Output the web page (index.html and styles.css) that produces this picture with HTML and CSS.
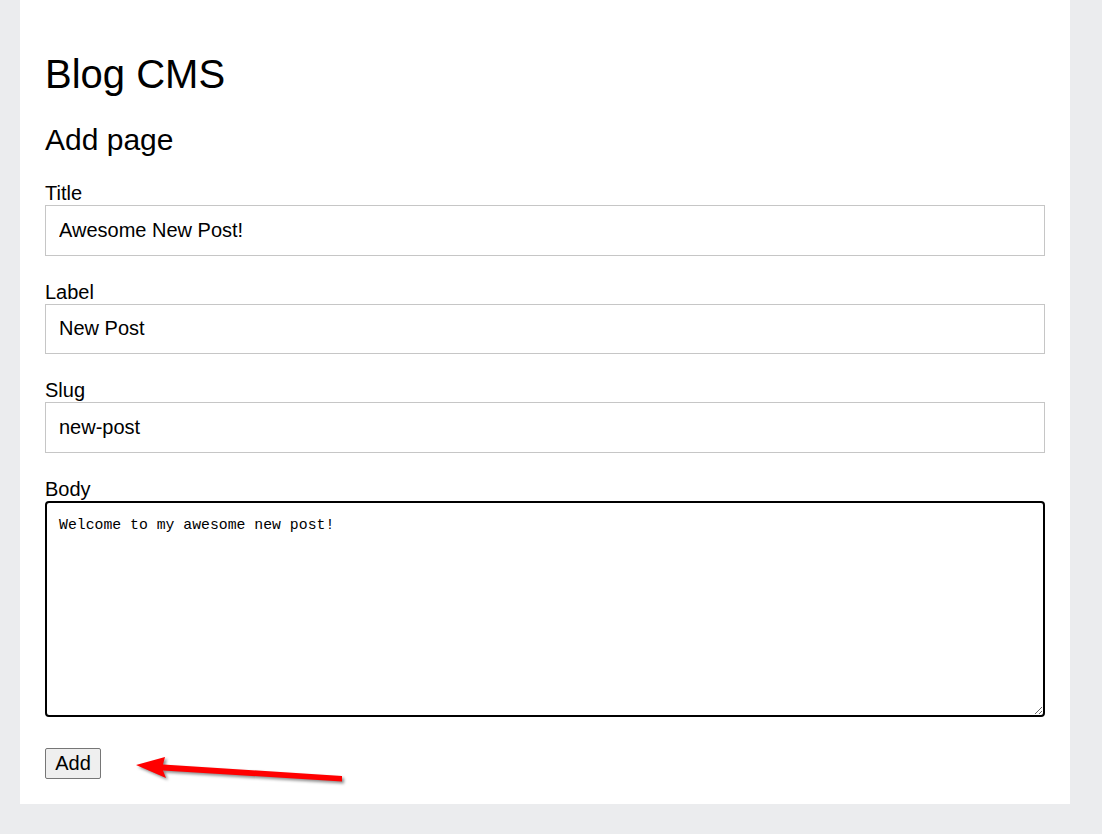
FILE: index.html
```html
<!DOCTYPE html>
<html lang="en">
<head>
<meta charset="utf-8">
<title>Blog CMS</title>
<link rel="stylesheet" href="styles.css">
</head>
<body>
<main class="page">
  <h1 class="title">Blog CMS</h1>
  <h2 class="subtitle">Add page</h2>
  <form class="form">
    <div class="field">
      <label class="label" for="title">Title</label>
      <input class="input" id="title" type="text" value="Awesome New Post!">
    </div>
    <div class="field">
      <label class="label" for="label">Label</label>
      <input class="input" id="label" type="text" value="New Post">
    </div>
    <div class="field">
      <label class="label" for="slug">Slug</label>
      <input class="input" id="slug" type="text" value="new-post">
    </div>
    <div class="field field-body">
      <label class="label" for="body">Body</label>
      <textarea class="textarea" id="body">Welcome to my awesome new post!</textarea>
    </div>
    <button class="button" type="button">Add</button>
  </form>
</main>
<svg class="arrow" width="230" height="40" viewBox="0 0 230 40" aria-hidden="true">
  <path d="M6 15 L35 7 L33 14.5 L212 26 L212 31.5 L33 20.5 L36 28 Z" fill="#ff0000"/>
</svg>
</body>
</html>
```

FILE: styles.css
```css
html, body {
  margin: 0;
  padding: 0;
}

body {
  background: #ebecee;
  font-family: "Liberation Sans", Arial, sans-serif;
  font-size: 20px;
  color: #000;
  min-height: 834px;
  position: relative;
}

.page {
  margin-left: 20px;
  width: 1050px;
  box-sizing: border-box;
  background: #fff;
  padding: 25px;
}

.title {
  font-size: 40px;
  line-height: 46px;
  font-weight: normal;
  margin: 26px 0 25px;
}

.subtitle {
  font-size: 30px;
  line-height: 35px;
  font-weight: normal;
  margin: 0 0 25px;
}

.form {
  display: flex;
  flex-direction: column;
}

.field {
  display: flex;
  flex-direction: column;
  margin-bottom: 25px;
}

.field-body {
  margin-bottom: 31px;
}

.label {
  line-height: 23px;
  font-size: 20px;
}

.input {
  box-sizing: border-box;
  height: 50.5px;
  width: 100%;
  margin: 0;
  padding: 0 13px;
  border: 1px solid #c6c6c6;
  border-radius: 0;
  font-family: "Liberation Sans", Arial, sans-serif;
  font-size: 20px;
  color: #000;
  background: #fff;
  outline: none;
}

.textarea {
  box-sizing: border-box;
  height: 216px;
  width: 100%;
  margin: 0;
  padding: 13px 12px;
  border: 2px solid #000;
  border-radius: 4px;
  font-family: "Liberation Mono", "DejaVu Sans Mono", monospace;
  font-size: 14.8px;
  line-height: 18px;
  color: #000;
  background: #fff;
  outline: none;
}

.button {
  align-self: flex-start;
  box-sizing: border-box;
  width: 56px;
  height: 31px;
  margin: 0;
  padding: 0;
  border: 1px solid #767676;
  border-radius: 2px;
  background: #efefef;
  font-family: "Liberation Sans", Arial, sans-serif;
  font-size: 20px;
  line-height: 27px;
  color: #000;
}

.arrow {
  position: absolute;
  left: 130px;
  top: 750px;
  filter: drop-shadow(2px 2px 1.5px rgba(0, 0, 0, 0.45));
}
```
